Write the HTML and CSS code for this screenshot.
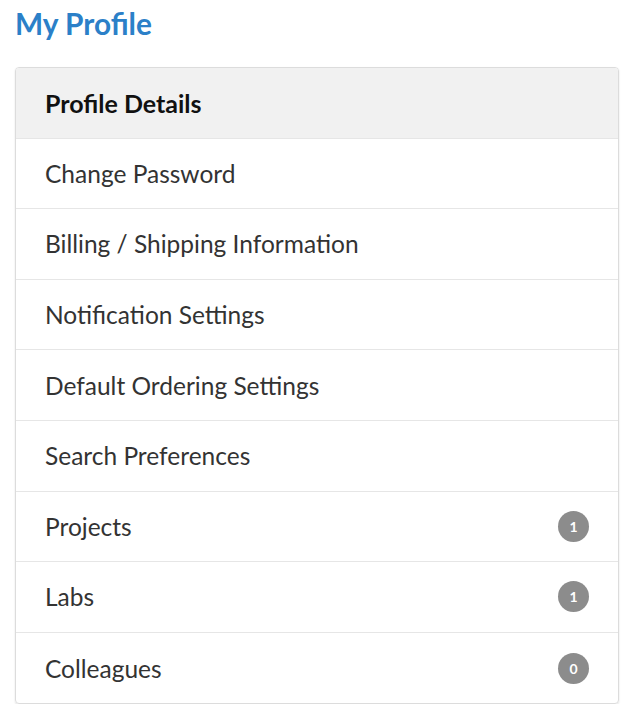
FILE: index.html
```html
<!DOCTYPE html>
<html>
<head>
<meta charset="utf-8">
<link rel="stylesheet" href="styles.css">
</head>
<body>
<h1 class="title">My Profile</h1>
<div class="panel">
  <div class="row active">Profile Details</div>
  <div class="row">Change Password</div>
  <div class="row">Billing / Shipping Information</div>
  <div class="row">Notification Settings</div>
  <div class="row">Default Ordering Settings</div>
  <div class="row">Search Preferences</div>
  <div class="row">Projects <span class="badge">1</span></div>
  <div class="row">Labs <span class="badge">1</span></div>
  <div class="row">Colleagues <span class="badge">0</span></div>
</div>
</body>
</html>
```
FILE: styles.css
```css
html, body {
  margin: 0;
  padding: 0;
  background: #fff;
}
body {
  padding: 0 2px 0 15px;
  font-family: Lato, "Liberation Sans", sans-serif;
}
.title {
  margin: 0;
  padding-top: 5px;
  height: 67px;
  box-sizing: border-box;
  font-size: 29.8px;
  font-weight: 700;
  color: #2b80c8;
  line-height: 38px;
}
.panel {
  border: 1px solid #dcdcdc;
  border-radius: 4px;
  box-shadow: 0 1px 2px rgba(0,0,0,0.12);
  overflow: hidden;
}
.row {
  height: 70.6px;
  box-sizing: border-box;
  display: flex;
  align-items: center;
  justify-content: space-between;
  padding: 0 29px 0 29px;
  font-size: 24.5px;
  color: #333;
  border-bottom: 1px solid #e6e6e6;
}
.row:last-child {
  border-bottom: none;
}
.row.active {
  background: #f1f1f1;
  font-weight: 700;
  font-size: 25px;
  color: #111;
}
.badge {
  width: 31px;
  height: 31px;
  border-radius: 50%;
  background: #8c8c8c;
  color: #fff;
  font-size: 14px;
  font-weight: 700;
  display: flex;
  align-items: center;
  justify-content: center;
}
```
